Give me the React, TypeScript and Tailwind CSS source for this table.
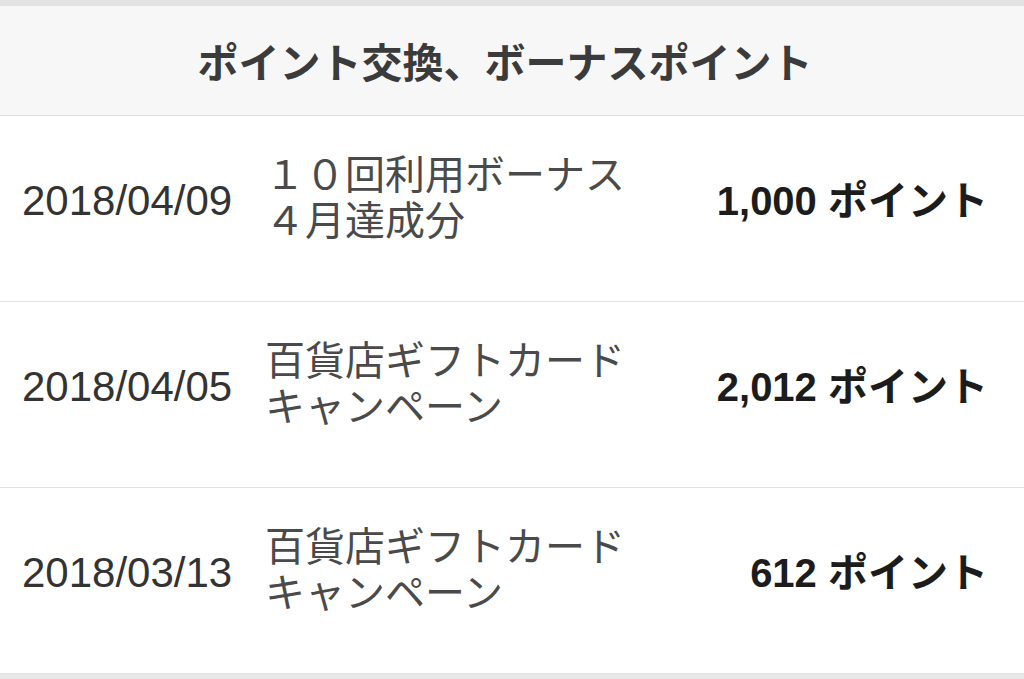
import React from "react";

const rows = [
  { date: "2018/04/09", title: ["１０回利用ボーナス", "４月達成分"], points: "1,000" },
  { date: "2018/04/05", title: ["百貨店ギフトカード", "キャンペーン"], points: "2,012" },
  { date: "2018/03/13", title: ["百貨店ギフトカード", "キャンペーン"], points: "612" },
];

export default function App(): React.JSX.Element {
  return (
    <main
      className="w-[1024px] h-[679px] overflow-hidden bg-white flex flex-col"
      style={{ fontFamily: '"Liberation Sans", "Noto Sans CJK JP", sans-serif' }}
    >
      <div className="h-[6px] bg-[#e2e2e2] shrink-0" />
      <header className="h-[110px] shrink-0 bg-[#f7f7f7] border-b border-[#dcdcdc] flex items-center justify-center">
        <h1
          className="text-[41px] font-bold text-[#3b3b3b] leading-none pr-[14px]"
          style={{ fontFamily: '"Noto Sans CJK JP", sans-serif' }}
        >
          ポイント交換、ボーナスポイント
        </h1>
      </header>

      {rows.map((r) => (
        <div
          key={r.date + r.points}
          className="h-[186px] shrink-0 border-b border-[#e2e2e2] flex items-center pb-[16px] pl-[22px] pr-[36px]"
        >
          <div className="w-[243px] shrink-0 text-[42px] text-[#333] leading-none">{r.date}</div>
          <div
            className="flex-1 text-[40px] leading-[46px] text-[#4a4a4a] pb-[12px]"
            style={{ fontFamily: '"Noto Sans CJK JP", sans-serif' }}
          >
            {r.title.map((t) => (
              <div key={t}>{t}</div>
            ))}
          </div>
          <div className="shrink-0 text-[40px] font-bold text-[#1c1c1c] leading-none">
            {r.points} ポイント
          </div>
        </div>
      ))}

      <div className="flex-1 bg-[#e6e6e6]" />
    </main>
  );
}
